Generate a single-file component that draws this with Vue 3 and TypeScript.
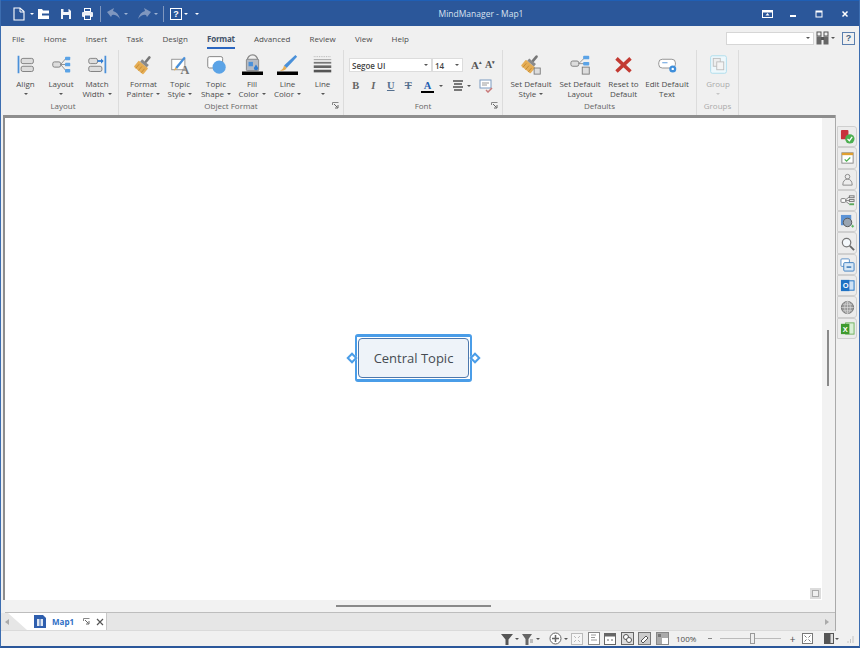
<template>
  <div class="window">
    <header class="titlebar">
      <div class="qat">
        <svg width="14" height="16" viewBox="0 0 14 16"><path d="M2 2h6l4 3.5V14H2z" fill="none" stroke="#fff" stroke-width="1.1" /><path d="M8 2v4h4" fill="none" stroke="#fff" /></svg>
        <i class="caret light new-caret"></i>
        <svg class="q-open" width="15" height="14" viewBox="0 0 15 14"><path d="M2 2h4l1 1.5h6V12H2z" fill="#fff" /><rect x="6" y="6.5" width="7" height="2" fill="#2b579a" /></svg>
        <svg class="q-save" width="14" height="14" viewBox="0 0 14 14"><path d="M2 2h8l2 2v8H2z" fill="#f2f5fa" /><rect x="4.5" y="2" width="5" height="3" fill="#2b579a" /><rect x="4" y="8" width="6" height="4" fill="#2b579a" /></svg>
        <svg class="q-print" width="15" height="14" viewBox="0 0 15 14"><rect x="4.5" y="1.5" width="6" height="3" fill="none" stroke="#fff" /><rect x="2" y="5" width="11" height="5" rx="1" fill="#e8edf5" /><rect x="4.5" y="8" width="6" height="4.5" fill="#2b579a" stroke="#fff" /></svg>
        <span class="qat-sep"></span>
        <svg width="15" height="13" viewBox="0 0 15 13"><path d="M1 5 L8 1 L7 4 Q12 5 14 12 Q10 7 6 8 L5 10z" fill="#7f97bf" /></svg>
        <i class="caret dim undo-caret"></i>
        <svg class="q-redo" width="15" height="13" viewBox="0 0 15 13"><path d="M14 5 L7 1 L8 4 Q3 5 1 12 Q5 7 9 8 L10 10z" fill="#7f97bf" /></svg>
        <i class="caret dim redo-caret"></i>
        <span class="qat-sep"></span>
        <span class="help-box">?</span>
        <i class="caret light help-caret"></i>
        <i class="caret light"></i>
      </div>
      <div class="app-title">MindManager - Map1</div>
      <div class="win-buttons">
        <span class="win-btn"><svg width="11" height="8" viewBox="0 0 11 8"><rect x="0.5" y="0.5" width="10" height="7" fill="none" stroke="#fff" /><rect x="0.5" y="0.5" width="10" height="2" fill="#fff" /><path d="M3.5 5.5l2-2.5 2 2.5z" fill="#fff" /></svg></span>
        <span class="win-btn"><svg width="8" height="8" viewBox="0 0 8 8"><rect x="1" y="5" width="6" height="2" fill="#fff" /></svg></span>
        <span class="win-btn"><svg width="8" height="8" viewBox="0 0 8 8"><rect x="1" y="1" width="6" height="6" fill="none" stroke="#fff" /><rect x="1" y="1" width="6" height="1.5" fill="#fff" /></svg></span>
        <span class="win-btn"><svg width="8" height="8" viewBox="0 0 8 8"><path d="M1.5 1.5l5 5M6.5 1.5l-5 5" stroke="#fff" stroke-width="1.5" /></svg></span>
      </div>
    </header>

    <nav class="tabs">
      <span v-for="t in tabs" :key="t" class="tab" :class="{ active: t === 'Format' }">{{ t }}</span>
      <div class="tabs-right">
        <div class="search-box"><i class="caret"></i></div>
        <svg width="13" height="14" viewBox="0 0 13 14"><rect x="1" y="1" width="4" height="4" fill="none" stroke="#555" /><rect x="8" y="1" width="4" height="4" fill="none" stroke="#555" /><rect x="0.5" y="5.5" width="5" height="8" fill="#666" /><rect x="7.5" y="5.5" width="5" height="8" fill="#666" /><rect x="5" y="6" width="3" height="3" fill="#555" /></svg>
        <i class="caret"></i>
        <span class="help-small">?</span>
      </div>
    </nav>

    <section class="ribbon">
      <div class="group g-layout">
        <div class="group-body">
          <div class="tool w35">
            <svg class="ic" viewBox="0 0 24 24"><rect x="3" y="2" width="2" height="20" fill="#4a90d9" /><rect x="7" y="5" width="14" height="6" rx="2" fill="#ddd" stroke="#777" /><rect x="7" y="14" width="14" height="6" rx="2" fill="#ddd" stroke="#777" /></svg>
            <span>Align</span><i class="caret"></i>
          </div>
          <div class="tool w36">
            <svg class="ic" viewBox="0 0 24 24"><path d="M11 12L17 5M11 12h6M11 12l6 7" stroke="#888" fill="none" /><rect x="2" y="9" width="9" height="6" rx="2" fill="#ddd" stroke="#777" /><rect x="16" y="3" width="6" height="4" rx="1" fill="#5ba3e6" /><rect x="16" y="10" width="6" height="4" rx="1" fill="#5ba3e6" /><rect x="16" y="17" width="6" height="4" rx="1" fill="#5ba3e6" /></svg>
            <span>Layout</span><i class="caret"></i>
          </div>
          <div class="tool w36">
            <svg class="ic" viewBox="0 0 24 24"><rect x="20" y="2" width="2" height="20" fill="#4a90d9" /><rect x="2" y="5" width="10" height="6" rx="2" fill="#ddd" stroke="#777" /><path d="M12 8h6" stroke="#2f7bd0" stroke-width="2" /><path d="M16 5l3 3-3 3z" fill="#2f7bd0" /><rect x="2" y="14" width="15" height="6" rx="2" fill="#ddd" stroke="#777" /></svg>
            <span>Match<br />Width <i class="caret inline"></i></span>
          </div>
        </div>
        <div class="group-label">Layout</div>
      </div>

      <div class="group g-object">
        <div class="group-body">
          <div class="tool w37 shift6">
            <svg class="ic" viewBox="0 0 24 24"><g transform="rotate(40 12 12)"><rect x="5" y="12" width="14" height="9" rx="1" fill="#e5ad55" /><path d="M8 15v6M12 15v6M16 15v6" stroke="#c48a32" /><rect x="7" y="8.5" width="10" height="3.5" fill="#8a8a8a" /><rect x="10.5" y="0" width="3" height="9" rx="1.5" fill="#777" /></g></svg>
            <span>Format<br />Painter <i class="caret inline"></i></span>
          </div>
          <div class="tool w36">
            <svg class="ic" viewBox="0 0 24 24"><rect x="2" y="6" width="15" height="12" fill="#fff" stroke="#8a8a8a" /><path d="M6 15L16 3l2 1.5L8 17z" fill="#4a90d9" /><path d="M4.5 19L6 15l2 2z" fill="#e5ad55" /><text x="12" y="22.5" font-size="14" font-family="Liberation Serif" font-weight="700" fill="#777">A</text></svg>
            <span>Topic<br />Style <i class="caret inline"></i></span>
          </div>
          <div class="tool w36">
            <svg class="ic" viewBox="0 0 24 24"><rect x="2" y="3" width="17" height="13" rx="2" fill="#fff" stroke="#777" /><circle cx="15" cy="15" r="7.5" fill="#5ba3e6" /></svg>
            <span>Topic<br />Shape <i class="caret inline"></i></span>
          </div>
          <div class="tool w36">
            <svg class="ic" viewBox="0 0 24 24"><path d="M6 7a6 6 0 0 1 12 0" fill="none" stroke="#8a8a8a" stroke-width="1.5" /><rect x="5" y="6" width="14" height="13" rx="1" fill="#b4bac3" stroke="#808080" /><rect x="7.5" y="9" width="5" height="5" fill="#4a90d9" /><path d="M16 12l2.5 4a2.5 2.5 0 0 1-5 0z" fill="#2f7bd0" /><rect x="0" y="20" width="24" height="4" fill="#000" /></svg>
            <span>Fill<br />Color <i class="caret inline"></i></span>
          </div>
          <div class="tool w35">
            <svg class="ic" viewBox="0 0 24 24"><path d="M8 13L21 1l2 2L11 16z" fill="#4a90d9" /><path d="M3 19q4-1 5-6l3 3q-2 4-8 3z" fill="#e5ad55" /><rect x="0" y="20" width="24" height="4" fill="#000" /></svg>
            <span>Line<br />Color <i class="caret inline"></i></span>
          </div>
          <div class="tool w35">
            <svg class="ic" viewBox="0 0 24 24"><path d="M2 3h20" stroke="#aaa" stroke-dasharray="1 1" /><rect x="2" y="6" width="20" height="1" fill="#999" /><rect x="2" y="9" width="20" height="2" fill="#777" /><rect x="2" y="13" width="20" height="3" fill="#666" /><rect x="2" y="18" width="20" height="3" fill="#555" /></svg>
            <span>Line</span><i class="caret"></i>
          </div>
        </div>
        <div class="group-label">Object Format<svg class="launcher" width="7" height="7" viewBox="0 0 7 7"><path d="M0.5 3V0.5H6.5" fill="none" stroke="#888" /><path d="M2 2l3.5 3.5M6 3v3H3" fill="none" stroke="#666" /></svg></div>
      </div>

      <div class="group g-font">
        <div class="font-body">
          <div class="font-row">
            <div class="combo font-name"><b>Segoe UI</b><i class="caret"></i></div>
            <div class="combo font-size"><b>14</b><i class="caret"></i></div>
            <span class="grow-a">A<sup>▴</sup></span>
            <span class="shrink-a">A<sup>▾</sup></span>
          </div>
          <div class="font-row fmt">
            <span class="fb">B</span>
            <span class="fi">I</span>
            <span class="fu">U</span>
            <span class="fs">T</span>
            <span class="fc">A</span>
            <i class="caret"></i>
            <svg width="14" height="12" viewBox="0 0 14 12"><path d="M2 1h10M3 4h8M2 7h10M3 10h8" stroke="#777" stroke-width="2" /></svg>
            <i class="caret"></i>
            <svg width="14" height="14" viewBox="0 0 14 14"><rect x="1" y="1" width="11" height="8" fill="#fff" stroke="#7b9ac0" /><path d="M3 4h7M3 6h5" stroke="#999" /><path d="M7 11l2 2 4-4" fill="none" stroke="#c97a7a" stroke-width="1.5" /></svg>
          </div>
        </div>
        <div class="group-label">Font<svg class="launcher" width="7" height="7" viewBox="0 0 7 7"><path d="M0.5 3V0.5H6.5" fill="none" stroke="#888" /><path d="M2 2l3.5 3.5M6 3v3H3" fill="none" stroke="#666" /></svg></div>
      </div>

      <div class="group g-defaults">
        <div class="group-body">
          <div class="tool w50 shift3">
            <svg class="ic" viewBox="0 0 24 24"><g transform="rotate(40 11 11)"><rect x="4" y="11" width="14" height="9" rx="1" fill="#e5ad55" /><path d="M7 14v6M11 14v6M15 14v6" stroke="#c48a32" /><rect x="6" y="7.5" width="10" height="3.5" fill="#8a8a8a" /><rect x="9.5" y="-1" width="3" height="9" rx="1.5" fill="#777" /></g><rect x="15" y="16" width="7" height="7" fill="#ddd" stroke="#777" /></svg>
            <span>Set Default<br />Style <i class="caret inline"></i></span>
          </div>
          <div class="tool w48">
            <svg class="ic" viewBox="0 0 24 24"><path d="M10 11L16 5M10 11h6" stroke="#888" fill="none" /><rect x="1" y="8" width="9" height="6" rx="2" fill="#ddd" stroke="#777" /><rect x="15" y="2" width="7" height="4" rx="1" fill="#5ba3e6" /><rect x="15" y="9" width="7" height="4" rx="1" fill="#5ba3e6" /><rect x="14" y="15" width="8" height="8" fill="#ddd" stroke="#777" /></svg>
            <span>Set Default<br />Layout</span>
          </div>
          <div class="tool w39">
            <svg class="ic" viewBox="0 0 24 24"><path d="M4 5l16 15M20 5L4 20" stroke="#c33a32" stroke-width="4" /></svg>
            <span>Reset to<br />Default</span>
          </div>
          <div class="tool w48">
            <svg class="ic" viewBox="0 0 24 24"><rect x="2" y="6" width="19" height="10" rx="4" fill="#fff" stroke="#888" /><path d="M6 10h6" stroke="#4a90d9" /><circle cx="18" cy="17" r="4" fill="#3f8fdb" /><circle cx="18" cy="17" r="1.4" fill="#fff" /></svg>
            <span>Edit Default<br />Text</span>
          </div>
        </div>
        <div class="group-label">Defaults</div>
      </div>

      <div class="group g-groups disabled">
        <div class="group-body">
          <div class="tool w42">
            <svg class="ic" viewBox="0 0 24 24"><rect x="3" y="2" width="18" height="20" rx="2" fill="#eef8fc" stroke="#a8dcec" /><rect x="6" y="5" width="8" height="9" fill="#eee" stroke="#bbb" /><rect x="10" y="9" width="8" height="9" fill="#f4f4f4" stroke="#bbb" /></svg>
            <span>Group</span><i class="caret pale"></i>
          </div>
        </div>
        <div class="group-label">Groups</div>
      </div>
    </section>

    <main class="workspace">
      <div class="doc">
        <div class="canvas-row">
          <div class="canvas">
            <div class="topic">
              <i class="handle left"></i>
              <div class="topic-inner">Central Topic</div>
              <i class="handle right"></i>
            </div>
            <span class="corner-btn"><i></i></span>
          </div>
          <div class="vscroll"><span class="vthumb"></span></div>
        </div>
        <div class="hscroll"><span class="hthumb"></span></div>
        <div class="tabstrip">
          <span class="arrow-left"></span>
          <div class="doc-tab">
            <svg width="12" height="13" viewBox="0 0 12 13"><path d="M0 0h9l3 3v10H0z" fill="#2f5fae" /><rect x="3" y="4" width="6" height="7" fill="#dfe7f2" /><path d="M6 4v7" stroke="#2f5fae" /></svg>
            <span class="doc-name">Map1</span>
            <svg width="7" height="7" viewBox="0 0 7 7"><path d="M0.5 3V0.5H6.5" fill="none" stroke="#888" /><path d="M2 2l3.5 3.5M6 3v3H3" fill="none" stroke="#666" /></svg>
            <svg width="8" height="8" viewBox="0 0 8 8"><path d="M1 1l6 6M7 1L1 7" stroke="#555" stroke-width="1.2" /></svg>
          </div>
          <span class="arrow-right"></span>
        </div>
      </div>
      <aside class="side-panel">
        <div class="side-btn"><svg viewBox="0 0 16 16"><rect x="1" y="1" width="8" height="10" rx="1" fill="#c8323c" /><circle cx="10.5" cy="10.5" r="5" fill="#4caf50" /><path d="M8 10.5l2 2 3-4" fill="none" stroke="#fff" stroke-width="1.4" /></svg></div>
        <div class="side-btn"><svg viewBox="0 0 16 16"><rect x="2" y="3" width="12" height="11" fill="#fff" stroke="#888" /><rect x="2" y="3" width="12" height="2.5" fill="#e0a030" /><path d="M5 10l2 2 4-4" fill="none" stroke="#4caf50" stroke-width="1.3" /></svg></div>
        <div class="side-btn"><svg viewBox="0 0 16 16"><circle cx="8" cy="5" r="2.5" fill="none" stroke="#888" /><path d="M3 14q0-6 5-6.5q5 .5 5 6.5z" fill="none" stroke="#888" /></svg></div>
        <div class="side-btn"><svg viewBox="0 0 16 16"><path d="M5 8l5-4M5 8h5M5 8l5 4" stroke="#888" fill="none" /><rect x="1" y="6" width="5" height="4" rx="1" fill="#fff" stroke="#777" /><rect x="10" y="3" width="5" height="2" fill="none" stroke="#777" /><rect x="10" y="7" width="5" height="2" fill="none" stroke="#777" /><rect x="10" y="11" width="5" height="2" fill="#5aa85a" /></svg></div>
        <div class="side-btn"><svg viewBox="0 0 16 16"><rect x="1" y="1" width="11" height="11" fill="#5b93d6" /><circle cx="8" cy="9" r="4.5" fill="#9aa5b1" stroke="#555" /><path d="M12 13h3M13.5 11.5v3" stroke="#4caf50" /></svg></div>
        <div class="side-btn"><svg viewBox="0 0 16 16"><circle cx="7" cy="7" r="4.5" fill="#f4f8fb" stroke="#777" stroke-width="1.3" /><path d="M10.5 10.5L15 15" stroke="#666" stroke-width="2" /></svg></div>
        <div class="side-btn"><svg viewBox="0 0 16 16"><rect x="1" y="2" width="9" height="8" rx="1" fill="#fff" stroke="#5a8fc8" /><rect x="4" y="6" width="11" height="9" rx="1" fill="#d8e8f6" stroke="#3f7fc0" /><rect x="7" y="10" width="5" height="1.5" fill="#2f6fb0" /></svg></div>
        <div class="side-btn"><svg viewBox="0 0 16 16"><rect x="6" y="3" width="9" height="10" fill="#cfe2f5" stroke="#1f72c4" /><rect x="1" y="2" width="9" height="12" fill="#1f72c4" /><text x="3" y="11" font-size="8" font-family="Liberation Sans" font-weight="700" fill="#fff">O</text></svg></div>
        <div class="side-btn"><svg viewBox="0 0 16 16"><circle cx="8" cy="8" r="6.5" fill="#9a9a9a" stroke="#707070" /><path d="M1.5 8h13M8 1.5v13M3 4.5h10M3 11.5h10" stroke="#ddd" stroke-width=".7" /><ellipse cx="8" cy="8" rx="3" ry="6.5" fill="none" stroke="#ddd" stroke-width=".7" /></svg></div>
        <div class="side-btn"><svg viewBox="0 0 16 16"><rect x="6" y="2" width="9" height="12" fill="#d9efd5" stroke="#6fb05f" /><rect x="1" y="3" width="9" height="11" fill="#3f9a2e" /><text x="3" y="11.5" font-size="8" font-family="Liberation Sans" font-weight="700" fill="#fff">X</text></svg></div>
      </aside>
    </main>

    <footer class="statusbar">
      <svg width="12" height="12" viewBox="0 0 12 12"><path d="M0 1h12L7.5 6.5V12h-3V6.5z" fill="#555" /></svg><i class="caret"></i>
      <svg width="12" height="12" viewBox="0 0 12 12"><path d="M0 1h10L6.5 6V12h-3V6z" fill="#666" /><path d="M8 7h3M8 9h3" stroke="#888" /></svg><i class="caret"></i>
      <svg class="push" width="13" height="13" viewBox="0 0 13 13"><circle cx="6.5" cy="6.5" r="5.5" fill="#fff" stroke="#666" /><path d="M6.5 3v7M3 6.5h7" stroke="#666" stroke-width="1.5" /></svg><i class="caret"></i>
      <svg width="12" height="12" viewBox="0 0 12 12"><rect x=".5" y=".5" width="11" height="11" fill="#f6f6f6" stroke="#bbb" /><path d="M3 3l2 2M9 3L7 5M3 9l2-2M9 9L7 7" stroke="#bbb" /></svg>
      <svg width="12" height="13" viewBox="0 0 12 13"><rect x=".5" y=".5" width="11" height="12" fill="#fff" stroke="#888" /><path d="M3 3h5M3 5.5h4M3 8h6" stroke="#999" /></svg>
      <svg width="12" height="12" viewBox="0 0 12 12"><rect x=".5" y=".5" width="11" height="11" fill="#fff" stroke="#666" /><rect x="0" y="0" width="12" height="3.5" fill="#666" /><path d="M3 7h2M7 7h2" stroke="#666" /></svg>
      <svg width="13" height="13" viewBox="0 0 13 13"><rect x=".5" y=".5" width="12" height="12" fill="#ddd" stroke="#666" /><circle cx="5" cy="5" r="2.5" fill="#fff" stroke="#555" /><circle cx="8" cy="8" r="2.5" fill="#fff" stroke="#555" /></svg>
      <svg width="13" height="13" viewBox="0 0 13 13"><rect x=".5" y=".5" width="12" height="12" fill="#ccc" stroke="#777" /><path d="M3 9l3-3 2-2 2 2-5 5z" fill="#fff" stroke="#555" /></svg>
      <svg width="13" height="13" viewBox="0 0 13 13"><rect x=".5" y=".5" width="12" height="12" fill="#aaa" stroke="#888" /><rect x="6" y="6" width="6" height="6" fill="#fff" /><rect x="2" y="2" width="3" height="3" fill="#777" /></svg>
      <span class="zoom-value">100%</span>
      <span class="zoom-minus"></span>
      <div class="slider"><span class="slider-thumb"></span></div>
      <span class="zoom-plus">+</span>
      <svg class="fit" width="11" height="11" viewBox="0 0 11 11"><rect x=".5" y=".5" width="10" height="10" fill="#fff" stroke="#777" /><path d="M2.5 2.5l2 2M8.5 2.5l-2 2M2.5 8.5l2-2M8.5 8.5l-2-2" stroke="#777" /></svg>
      <svg class="panel-ic" width="10" height="11" viewBox="0 0 10 11"><rect width="10" height="11" fill="#555" /><rect x="6.5" y="1" width="2.5" height="9" fill="#ddd" /></svg><i class="caret"></i>
      <svg class="signal" width="7" height="8" viewBox="0 0 7 8"><path d="M6 1v7M3.5 4v4M1 6v2" stroke="#c4c4c4" /></svg>
    </footer>
  </div>
</template>

<script setup lang="ts">
const tabs: string[] = ['File', 'Home', 'Insert', 'Task', 'Design', 'Format', 'Advanced', 'Review', 'View', 'Help']
</script>

<style scoped>
.window {
  width: 860px;
  height: 648px;
  box-sizing: border-box;
  border: 1px solid #3c6db0;
  border-top: 0;
  border-bottom: 2px solid #2b579a;
  background: #f0f0f0;
  display: flex;
  flex-direction: column;
  font-family: "Open Sans", "Noto Sans", sans-serif;
  font-size: 8px;
  color: #4c4c4c;
  overflow: hidden;
}

.caret {
  display: inline-block;
  width: 0;
  height: 0;
  border-left: 2px solid transparent;
  border-right: 2px solid transparent;
  border-top: 2px solid #555;
  flex: none;
}
.caret.light { border-top-color: #fff; }
.caret.dim { border-top-color: #9fb4d3; }
.caret.pale { border-top-color: #c6c6c6; }
.caret.inline { vertical-align: middle; margin-left: 1px; }

.titlebar {
  height: 26px;
  margin: 0 -1px;
  flex: none;
  background: #2b579a;
  border-top: 1px solid #1f5fb5;
  box-sizing: border-box;
  display: flex;
  align-items: center;
  position: relative;
  color: #fff;
}
.qat {
  display: flex;
  align-items: center;
  padding-left: 12px;
}
.new-caret { margin: 0 1px 0 4px; }
.q-open { margin-left: 1px; }
.q-save { margin-left: 8px; }
.q-print { margin-left: 7px; }
.undo-caret { margin: 0 8px 0 3px; }
.q-redo { margin-left: 1px; }
.redo-caret { margin-left: 2px; }
.help-caret { margin: 0 7px 0 2px; }
.qat-sep {
  width: 1px;
  height: 16px;
  background: #7f97bf;
  margin: 0 5px;
}
.help-box {
  width: 10px;
  height: 10px;
  border: 1px solid #fff;
  font: 700 9px/10px "Liberation Sans", sans-serif;
  text-align: center;
  margin-left: 1px;
}
.app-title {
  position: absolute;
  left: 0;
  right: 0;
  text-align: center;
  font-size: 8.5px;
  color: #d9e2f0;
  padding-left: 102px;
  pointer-events: none;
}
.win-buttons {
  margin-left: auto;
  display: flex;
  align-items: center;
  padding-right: 2px;
}
.win-btn {
  width: 26px;
  display: flex;
  justify-content: center;
}

.tabs {
  height: 24px;
  flex: none;
  display: flex;
  align-items: center;
  padding-left: 11px;
}
.tab {
  margin-right: 19.2px;
  position: relative;
  white-space: nowrap;
}
.tab.active {
  font-weight: 700;
  letter-spacing: -0.25px;
  color: #44546a;
}
.tab.active::after {
  content: "";
  position: absolute;
  left: 0;
  right: 0;
  bottom: -5px;
  height: 2px;
  background: #2b66c0;
}
.tabs-right {
  margin-left: auto;
  display: flex;
  align-items: center;
  gap: 2px;
  padding-right: 4px;
}
.search-box {
  width: 88px;
  height: 13px;
  background: #fff;
  border: 1px solid #d6d6d6;
  display: flex;
  align-items: center;
  justify-content: flex-end;
  padding-right: 3px;
  box-sizing: border-box;
}
.help-small {
  width: 11px;
  height: 11px;
  border: 1px solid #5b7fae;
  color: #44617f;
  font: 700 9px/11px "Liberation Sans", sans-serif;
  text-align: center;
  margin-left: 5px;
}

.ribbon {
  height: 65px;
  flex: none;
  display: flex;
  padding-left: 7px;
}
.group {
  box-sizing: border-box;
  border-right: 1px solid #dcdcdc;
  display: flex;
  flex-direction: column;
  flex: none;
}
.g-layout { width: 111px; }
.g-object { width: 225px; }
.g-font { width: 159px; }
.g-defaults { width: 194px; }
.g-groups { width: 42px; }
.group-body {
  flex: 1;
  display: flex;
}
.group-label {
  height: 14px;
  line-height: 10px;
  text-align: center;
  position: relative;
  color: #666;
}
.launcher {
  position: absolute;
  right: 4px;
  top: 1px;
}
.tool {
  flex: none;
  display: flex;
  flex-direction: column;
  align-items: center;
  text-align: center;
  line-height: 9.5px;
  padding-top: 4px;
  white-space: nowrap;
}
.w35 { width: 35px; }
.w36 { width: 36px; }
.w37 { width: 37px; }
.w39 { width: 39px; }
.w42 { width: 42px; }
.w48 { width: 48px; }
.w50 { width: 50px; }
.shift3 { margin-left: 3px; }
.shift6 { margin-left: 6px; }
.ic {
  width: 21px;
  height: 21px;
  margin-bottom: 4px;
  flex: none;
  overflow: visible;
}
.tool > .caret { margin-top: 4px; }
.disabled .tool, .disabled .group-label { color: #aaa; }

.font-body {
  flex: 1;
  padding: 8px 0 0 5px;
  display: flex;
  flex-direction: column;
  gap: 7px;
}
.font-row {
  display: flex;
  align-items: center;
  height: 14px;
}
.combo {
  height: 14px;
  box-sizing: border-box;
  border: 1px solid #dcdcdc;
  background: #fff;
  display: flex;
  align-items: center;
  justify-content: space-between;
  padding: 0 3px 0 2px;
}
.font-name { width: 83px; }
.font-size { width: 31px; }
.combo b { font-weight: 600; color: #444; }
.grow-a, .shrink-a {
  font: 700 11px/14px "Liberation Serif", serif;
  color: #555;
  margin-left: 8px;
}
.shrink-a { font-size: 10px; margin-left: 3px; }
.grow-a sup, .shrink-a sup { font-size: 5px; line-height: 0; }
.fmt { margin-left: -2px; }
.fb, .fi, .fu, .fs, .fc {
  font: 700 10.5px/14px "Liberation Serif", serif;
  color: #666;
  width: 17.5px;
  text-align: center;
  flex: none;
}
.fi { font-style: italic; }
.fu { text-decoration: underline; color: #55708f; }
.fs { text-decoration: line-through; color: #55708f; }
.fc {
  width: 13px;
  margin-left: 4px;
  color: #1f5fb0;
  border-bottom: 2px solid #000;
  line-height: 11px;
  margin-right: 5px;
}
.fmt svg { margin: 0 2px 0 8px; flex: none; }

.workspace {
  flex: 1;
  display: flex;
  min-height: 0;
}
.doc {
  width: 835px;
  flex: none;
  display: flex;
  flex-direction: column;
  border-right: 1px solid #aaa;
  box-sizing: border-box;
}
.canvas-row {
  flex: 1;
  display: flex;
  min-height: 0;
  border-top: 3px solid #8e8e8e;
  border-left: 2px solid #8e8e8e;
  margin-left: 2px;
}
.canvas {
  flex: 1;
  background: #fff;
  position: relative;
}
.topic {
  position: absolute;
  left: 350px;
  top: 216px;
  width: 117px;
  height: 48px;
  box-sizing: border-box;
  border-style: solid;
  border-color: #4a9de8;
  border-width: 3px 2px;
  border-radius: 3px;
  padding: 1px;
  background: #fff;
}
.topic-inner {
  height: 100%;
  box-sizing: border-box;
  border: 1px solid #4d78ad;
  border-radius: 4px;
  background: #eef3f9;
  display: flex;
  align-items: center;
  justify-content: center;
  font-size: 13px;
  color: #454b52;
}
.handle {
  position: absolute;
  top: 16.5px;
  width: 4px;
  height: 4px;
  background: #fff;
  border: 2px solid #4a9de8;
  transform: rotate(45deg);
}
.handle.left { left: -9px; }
.handle.right { right: -9px; }
.corner-btn {
  position: absolute;
  right: 1px;
  bottom: 1px;
  width: 11px;
  height: 11px;
  background: #dcdcdc;
  display: flex;
  align-items: center;
  justify-content: center;
}
.corner-btn i {
  width: 5px;
  height: 5px;
  border: 1px solid #aaa;
  background: #efefef;
}
.vscroll {
  width: 13px;
  flex: none;
  background: #f2f2f2;
  position: relative;
}
.vthumb {
  position: absolute;
  left: 5px;
  top: 212px;
  width: 2px;
  height: 56px;
  background: #8a8a8a;
}
.hscroll {
  height: 13px;
  box-sizing: border-box;
  flex: none;
  background: #f2f2f2;
  margin-left: 4px;
  position: relative;
  border-bottom: 1px solid #bdbdbd;
}
.hthumb {
  position: absolute;
  left: 331px;
  top: 5px;
  width: 155px;
  height: 2px;
  background: #8a8a8a;
}
.tabstrip {
  height: 18px;
  box-sizing: border-box;
  flex: none;
  background: #e6e6e6;
  border-bottom: 1px solid #dadada;
  display: flex;
  align-items: center;
  position: relative;
}
.arrow-left, .arrow-right {
  position: absolute;
  top: 6px;
  width: 0;
  height: 0;
  border-top: 3px solid transparent;
  border-bottom: 3px solid transparent;
}
.arrow-left { left: 4px; border-right: 4px solid #aaa; }
.arrow-right { right: 6px; border-left: 4px solid #aaa; }
.doc-tab {
  margin-left: 7px;
  width: 99px;
  height: 17px;
  box-sizing: border-box;
  background: #fff;
  clip-path: polygon(0 0, 100% 0, 100% 100%, 19px 100%);
  display: flex;
  align-items: center;
  padding-left: 26px;
  gap: 6px;
  border-right: 1px solid #c8c8c8;
}
.doc-name {
  font-weight: 700;
  color: #2f6fc6;
  margin-right: 3px;
}
.side-panel {
  flex: 1;
  display: flex;
  flex-direction: column;
  padding: 11px 0 0 1px;
}
.side-btn {
  width: 20px;
  height: 21.3px;
  box-sizing: border-box;
  border: 1px solid #cfcfcf;
  border-radius: 0 3px 3px 0;
  background: #ececec;
  display: flex;
  align-items: center;
  justify-content: center;
}
.side-btn svg { width: 15px; height: 15px; }

.statusbar {
  height: 15px;
  flex: none;
  display: flex;
  align-items: center;
  gap: 4.5px;
  padding-left: 500px;
  box-sizing: border-box;
}
.statusbar .caret { margin: 0 -1px 0 -3px; }
.push { margin-left: 6px; }
.zoom-value { margin: 0 7px 0 3px; }
.zoom-minus {
  width: 4px;
  height: 1px;
  background: #888;
  margin-right: 4px;
}
.slider {
  width: 61px;
  height: 1px;
  background: #bbb;
  position: relative;
}
.slider-thumb {
  position: absolute;
  left: 30px;
  top: -5px;
  width: 3px;
  height: 9px;
  background: #eee;
  border: 1px solid #999;
}
.zoom-plus { font-size: 10px; line-height: 10px; margin-left: 4px; }
.fit { margin-left: 2px; }
.panel-ic { margin-left: 6px; }
.signal { margin-left: 4px; }
</style>

<style>
body { margin: 0; }
</style>
